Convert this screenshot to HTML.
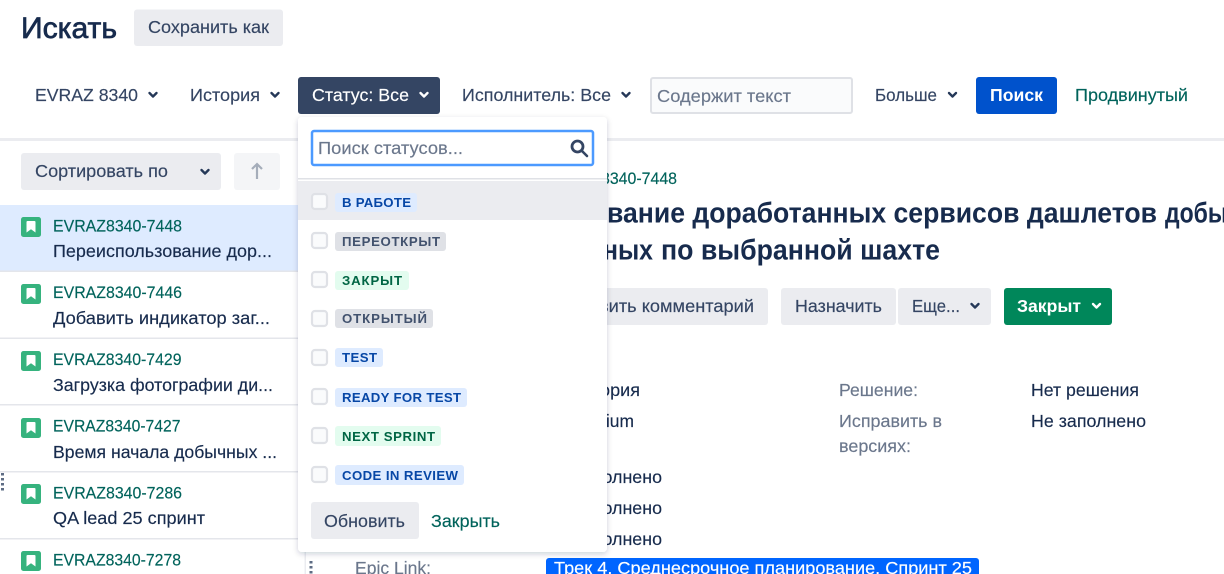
<!DOCTYPE html>
<html lang="ru"><head><meta charset="utf-8"><title>Искать</title>
<style>
html,body{margin:0;padding:0;background:#fff;width:1224px;height:574px;overflow:hidden}
svg{display:block}
text{font-family:"Liberation Sans",sans-serif;font-size:17.5px;fill:#172b4d;stroke:#172b4d;stroke-width:.15;white-space:pre}
.n{fill:#344563;stroke:#344563}.k{fill:#00635b;stroke:#00635b;font-size:16.5px}.l{fill:#00635b;stroke:#00635b}.g{fill:#6b778c;stroke:#6b778c}.w{fill:#fff;stroke:#fff}
.b{font-weight:bold;stroke-width:0}.t{font-weight:bold;font-size:29px;fill:#172b4d;stroke-width:0}
.z{font-weight:bold;font-size:13.2px;stroke-width:0}
.ch{fill:none;stroke:#253858;stroke-width:2.4;stroke-linecap:round;stroke-linejoin:round}
.cb{fill:#fafbfc;stroke:#dfe1e6;stroke-width:2.2}
</style></head><body>
<svg width="1224" height="574" viewBox="0 0 1224 574" xmlns="http://www.w3.org/2000/svg">
<defs>
<filter id="s" x="-10%" y="-10%" width="120%" height="120%"><feDropShadow dx="0" dy="2" stdDeviation="3" flood-color="#091e42" flood-opacity=".2"/></filter>
<g id="i"><rect width="20" height="20" rx="2.5" fill="#36b37e"/><path d="M5.500 5q0-1 1-1h7q1 0 1 1v10.500l-4.500-3.200-4.500 3.200z" fill="#fff"/></g>
</defs>
<!-- header -->
<text x="21" y="38" style="font-size:30px;stroke-width:.7" textLength="96" lengthAdjust="spacingAndGlyphs">Искать</text>
<rect x="134" y="9.500" width="149" height="36.500" rx="3" fill="#ebecf0"/>
<text x="148" y="33" class="n" textLength="121" lengthAdjust="spacingAndGlyphs">Сохранить как</text>
<!-- filters -->
<text x="35" y="101" class="n" textLength="103" lengthAdjust="spacingAndGlyphs">EVRAZ 8340</text>
<path class="ch" d="M149.500 93l3.500 3.500 3.500-3.500"/>
<text x="190" y="101" class="n" textLength="70" lengthAdjust="spacingAndGlyphs">История</text>
<path class="ch" d="M271.500 93l3.500 3.500 3.500-3.500"/>
<rect x="298" y="77" width="142" height="37" rx="3" fill="#344563"/>
<text x="312" y="101" class="w" textLength="97" lengthAdjust="spacingAndGlyphs">Статус: Все</text>
<path class="ch" style="stroke:#fff" d="M420.500 93l3.500 3.500 3.500-3.500"/>
<text x="462" y="101" class="n" textLength="149" lengthAdjust="spacingAndGlyphs">Исполнитель: Все</text>
<path class="ch" d="M622.500 93l3.500 3.500 3.500-3.500"/>
<rect x="651" y="78" width="201" height="35" rx="2" fill="#fafbfc" stroke="#dfe1e6" stroke-width="2"/>
<text x="657" y="102" class="g" textLength="134" lengthAdjust="spacingAndGlyphs">Содержит текст</text>
<text x="875" y="101" class="n" textLength="62" lengthAdjust="spacingAndGlyphs">Больше</text>
<path class="ch" d="M949 93l3.500 3.500 3.500-3.500"/>
<rect x="976" y="77" width="81" height="37" rx="3" fill="#0052cc"/>
<text x="990" y="101" class="w b" textLength="53" lengthAdjust="spacingAndGlyphs">Поиск</text>
<text x="1075" y="101" class="l" textLength="113" lengthAdjust="spacingAndGlyphs">Продвинутый</text>
<rect x="0" y="138" width="1224" height="3" fill="#ebecf0"/>
<!-- sort -->
<rect x="21" y="153" width="200" height="37" rx="3" fill="#ebecf0"/>
<text x="35" y="177" class="n" textLength="133" lengthAdjust="spacingAndGlyphs">Сортировать по</text>
<path class="ch" d="M201.500 170l3.500 3.500 3.500-3.500"/>
<rect x="234" y="153" width="46" height="37" rx="3" fill="#f4f5f7"/>
<path d="M257 179v-15M252 169l5-5 5 5" fill="none" stroke="#a5adba" stroke-width="2.200"/>
<!-- list -->
<rect x="0" y="205" width="305" height="65.500" fill="#deebff"/>
<g fill="#e4e6eb"><rect x="0" y="270.500" width="305" height="1.500"/><rect x="0" y="337.500" width="305" height="1.500"/><rect x="0" y="404" width="305" height="1.500"/><rect x="0" y="471" width="305" height="1.500"/><rect x="0" y="538" width="305" height="1.500"/></g>
<use href="#i" x="21" y="217"/><use href="#i" x="21" y="284"/><use href="#i" x="21" y="351"/><use href="#i" x="21" y="418"/><use href="#i" x="21" y="484"/><use href="#i" x="21" y="551"/>
<text x="53" y="231.500" class="k" textLength="129" lengthAdjust="spacingAndGlyphs">EVRAZ8340-7448</text>
<text x="53" y="257" textLength="219" lengthAdjust="spacingAndGlyphs">Переиспользование дор...</text>
<text x="53" y="298" class="k" textLength="129" lengthAdjust="spacingAndGlyphs">EVRAZ8340-7446</text>
<text x="53" y="324" textLength="217" lengthAdjust="spacingAndGlyphs">Добавить индикатор заг...</text>
<text x="53" y="365" class="k" textLength="128.500" lengthAdjust="spacingAndGlyphs">EVRAZ8340-7429</text>
<text x="53" y="391" textLength="220" lengthAdjust="spacingAndGlyphs">Загрузка фотографии ди...</text>
<text x="53" y="431.500" class="k" textLength="127.500" lengthAdjust="spacingAndGlyphs">EVRAZ8340-7427</text>
<text x="53" y="458" textLength="224" lengthAdjust="spacingAndGlyphs">Время начала добычных ...</text>
<text x="53" y="498.500" class="k" textLength="129" lengthAdjust="spacingAndGlyphs">EVRAZ8340-7286</text>
<text x="53" y="524" textLength="152" lengthAdjust="spacingAndGlyphs">QA lead 25 спринт</text>
<text x="53" y="565.500" class="k" textLength="128" lengthAdjust="spacingAndGlyphs">EVRAZ8340-7278</text>
<g fill="#5e6c84"><rect x="1" y="473" width="3" height="2.500"/><rect x="1" y="478" width="3" height="2.500"/><rect x="1" y="483" width="3" height="2.500"/><rect x="1" y="488" width="3" height="2.500"/></g>
<rect x="304.500" y="141" width="1.500" height="433" fill="#ebecf0"/>
<g fill="#5e6c84"><rect x="309.500" y="561" width="3" height="2.500"/><rect x="309.500" y="566" width="3" height="2.500"/><rect x="309.500" y="571" width="3" height="2.500"/></g>
<!-- main -->
<text x="548" y="184" class="k" textLength="129" lengthAdjust="spacingAndGlyphs">EVRAZ8340-7448</text>
<text x="607" y="222.500" class="t" textLength="550" lengthAdjust="spacingAndGlyphs">вание доработанных сервисов дашлетов</text>
<text x="1165" y="222.500" class="t" textLength="90" lengthAdjust="spacingAndGlyphs">добычи</text>
<text x="603" y="259.500" class="t" textLength="50" lengthAdjust="spacingAndGlyphs">ных</text>
<text x="661" y="259.500" class="t" textLength="279" lengthAdjust="spacingAndGlyphs">по выбранной шахте</text>
<rect x="560" y="288" width="208" height="37" rx="3" fill="#ebecf0"/>
<text x="599" y="312" class="n" textLength="155" lengthAdjust="spacingAndGlyphs">вить комментарий</text>
<rect x="781" y="288" width="115" height="37" rx="3" fill="#ebecf0"/>
<text x="795" y="312" class="n" textLength="87" lengthAdjust="spacingAndGlyphs">Назначить</text>
<rect x="898" y="288" width="93" height="37" rx="3" fill="#ebecf0"/>
<text x="912" y="312" class="n" textLength="48" lengthAdjust="spacingAndGlyphs">Еще...</text>
<path class="ch" d="M971.500 304l3.500 3.500 3.500-3.500"/>
<rect x="1004" y="288" width="108" height="37" rx="3" fill="#00875a"/>
<text x="1017" y="312" class="w b" textLength="64" lengthAdjust="spacingAndGlyphs">Закрыт</text>
<path class="ch" style="stroke:#fff" d="M1093 304l3.500 3.500 3.500-3.500"/>
<text x="570" y="396" textLength="70" lengthAdjust="spacingAndGlyphs">История</text>
<text x="572" y="427" textLength="62" lengthAdjust="spacingAndGlyphs">Medium</text>
<text x="547" y="483" textLength="115" lengthAdjust="spacingAndGlyphs">Не заполнено</text>
<text x="547" y="514" textLength="115" lengthAdjust="spacingAndGlyphs">Не заполнено</text>
<text x="547" y="545" textLength="115" lengthAdjust="spacingAndGlyphs">Не заполнено</text>
<text x="839" y="396" class="g" textLength="79" lengthAdjust="spacingAndGlyphs">Решение:</text>
<text x="839" y="427" class="g" textLength="103" lengthAdjust="spacingAndGlyphs">Исправить в</text>
<text x="839" y="452" class="g" textLength="72" lengthAdjust="spacingAndGlyphs">версиях:</text>
<text x="1031" y="396" textLength="108" lengthAdjust="spacingAndGlyphs">Нет решения</text>
<text x="1031" y="427" textLength="115" lengthAdjust="spacingAndGlyphs">Не заполнено</text>
<text x="355" y="574" class="g" textLength="76" lengthAdjust="spacingAndGlyphs">Epic Link:</text>
<rect x="546" y="558" width="433" height="26" rx="3" fill="#0065ff"/>
<text x="554" y="574" class="w" textLength="418" lengthAdjust="spacingAndGlyphs">Трек 4. Среднесрочное планирование. Спринт 25</text>
<!-- dropdown -->
<rect x="298" y="117" width="309" height="435" rx="4" fill="#fff" filter="url(#s)"/>
<rect x="312" y="131" width="281" height="34" rx="2" fill="#fff" stroke="#4c9aff" stroke-width="2.500"/>
<text x="318" y="154" class="g" textLength="145" lengthAdjust="spacingAndGlyphs">Поиск статусов...</text>
<circle cx="577.500" cy="146.500" r="5.500" fill="none" stroke="#344563" stroke-width="2.800"/>
<path d="M582 151l5 5" stroke="#344563" stroke-width="2.600" stroke-linecap="round"/>
<rect x="298" y="178" width="309" height="1.500" fill="#dfe1e6"/>
<rect x="298" y="181" width="309" height="39" fill="#ebecf0"/>
<rect class="cb" x="312" y="194" width="15" height="15" rx="3"/>
<rect class="cb" x="312" y="233" width="15" height="15" rx="3"/>
<rect class="cb" x="312" y="272" width="15" height="15" rx="3"/>
<rect class="cb" x="312" y="311" width="15" height="15" rx="3"/>
<rect class="cb" x="312" y="350" width="15" height="15" rx="3"/>
<rect class="cb" x="312" y="389" width="15" height="15" rx="3"/>
<rect class="cb" x="312" y="428" width="15" height="15" rx="3"/>
<rect class="cb" x="312" y="467" width="15" height="15" rx="3"/>
<rect x="335" y="193" width="82" height="19" rx="3" fill="#deebff"/>
<text x="342" y="207" class="z" style="fill:#0747a6" textLength="69" lengthAdjust="spacing">В РАБОТЕ</text>
<rect x="335" y="232" width="111" height="19" rx="3" fill="#dfe1e6"/>
<text x="342" y="246" class="z" style="fill:#42526e" textLength="98" lengthAdjust="spacing">ПЕРЕОТКРЫТ</text>
<rect x="335" y="271" width="74" height="19" rx="3" fill="#e3fcef"/>
<text x="342" y="285" class="z" style="fill:#006644" textLength="60" lengthAdjust="spacing">ЗАКРЫТ</text>
<rect x="335" y="309" width="98" height="19" rx="3" fill="#dfe1e6"/>
<text x="342" y="323" class="z" style="fill:#42526e" textLength="85" lengthAdjust="spacing">ОТКРЫТЫЙ</text>
<rect x="335" y="348" width="48" height="19" rx="3" fill="#deebff"/>
<text x="342" y="362" class="z" style="fill:#0747a6" textLength="35" lengthAdjust="spacing">TEST</text>
<rect x="335" y="388" width="132" height="19" rx="3" fill="#deebff"/>
<text x="342" y="402" class="z" style="fill:#0747a6" textLength="119" lengthAdjust="spacing">READY FOR TEST</text>
<rect x="335" y="426" width="106" height="20" rx="3" fill="#e3fcef"/>
<text x="342" y="441" class="z" style="fill:#006644" textLength="93" lengthAdjust="spacing">NEXT SPRINT</text>
<rect x="335" y="465" width="129" height="20" rx="3" fill="#deebff"/>
<text x="342" y="480" class="z" style="fill:#0747a6" textLength="116" lengthAdjust="spacing">CODE IN REVIEW</text>
<rect x="311" y="502" width="108" height="37" rx="3" fill="#ebecf0"/>
<text x="324" y="527" class="n" textLength="81" lengthAdjust="spacingAndGlyphs">Обновить</text>
<text x="431" y="527" class="l" textLength="69" lengthAdjust="spacingAndGlyphs">Закрыть</text>
</svg>
</body></html>
